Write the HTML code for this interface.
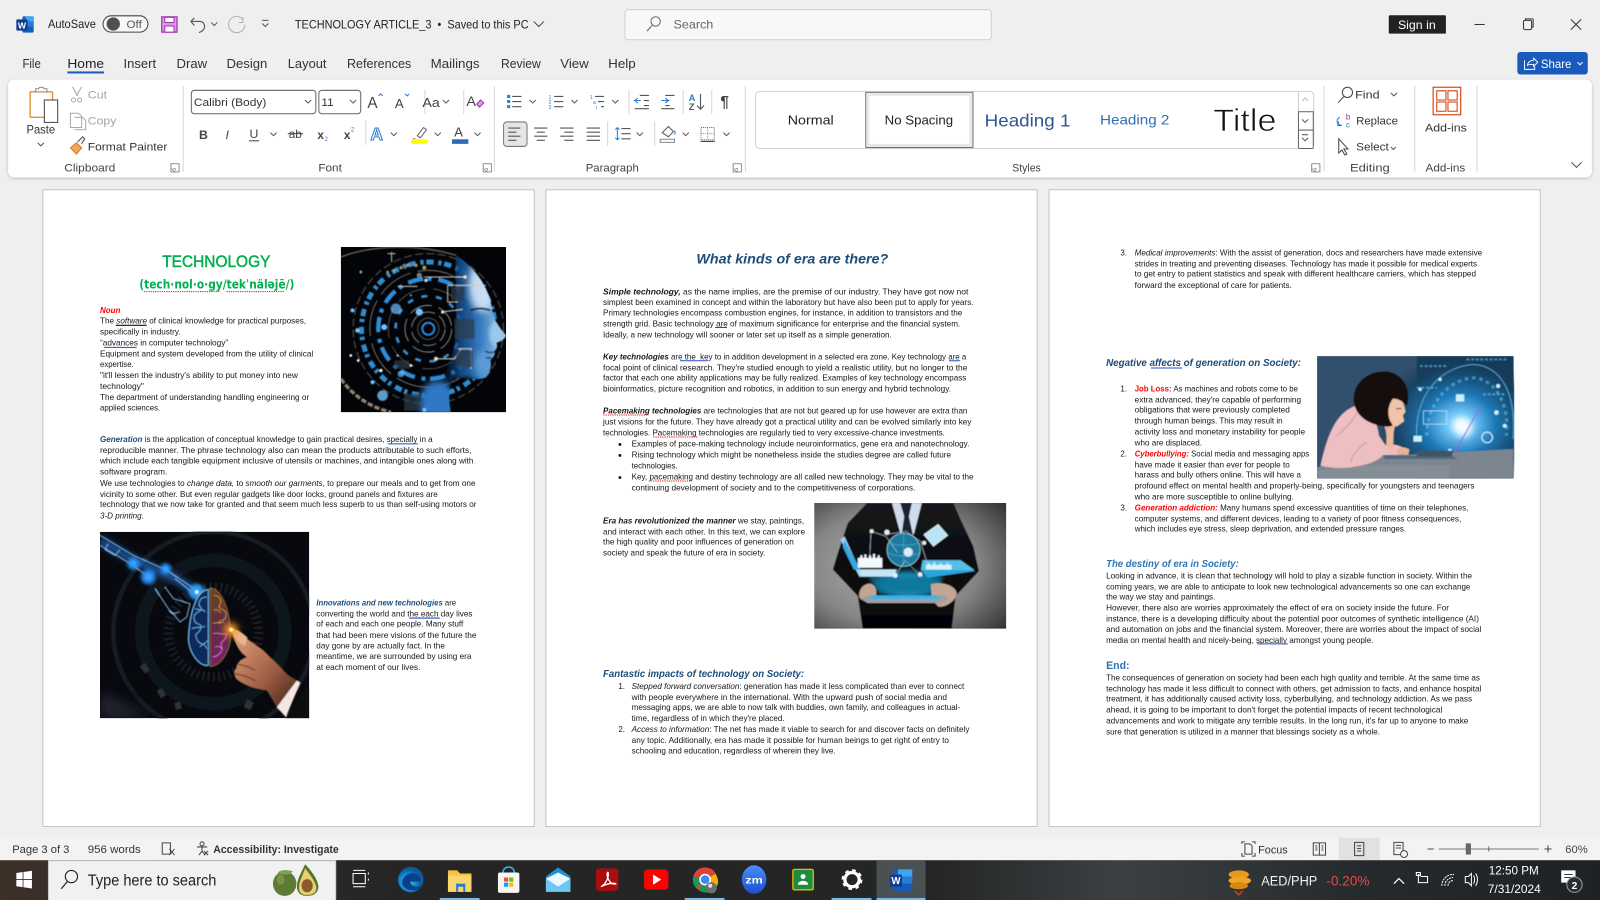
<!DOCTYPE html>
<html lang="en"><head><meta charset="utf-8"><title>TECHNOLOGY ARTICLE_3 - Word</title>
<style>
html,body{margin:0;padding:0;background:#efefef;overflow:hidden}
svg{display:block}
text{font-family:"Liberation Sans",sans-serif;white-space:pre}
.d{font-size:7.8px;fill:#181818}
.u{font-size:12px;fill:#333}
.g{font-size:11px;fill:#444}
.s{font-size:10.5px;fill:#444}
.bi{font-weight:bold;font-style:italic}
.i{font-style:italic}
.b1{fill:#1F4E79}
.r{fill:#f00}
.ic{fill:none;stroke:#555;stroke-width:1}
.ln{stroke:#555;stroke-width:1.1;fill:none}
.w{fill:none;stroke:#fff}
</style></head><body>
<svg xmlns="http://www.w3.org/2000/svg" width="1600" height="900" viewBox="0 0 1568 882">
<defs>
<path id="c" d="M0 0l3 3 3-3" fill="none" stroke="#555" stroke-width="1"/>
<g id="lb"><path d="M0 0v0M1 8l6 6M7 8h-3M7 8v3" transform="scale(.6)" fill="none" stroke="#555"/><rect x="0" y="0" width="8" height="8" fill="none" stroke="#777" stroke-width=".8"/></g>
<filter id="soft" x="-2%" y="-2%" width="104%" height="104%"><feGaussianBlur stdDeviation=".22"/></filter>
<filter id="img" x="0" y="0" width="100%" height="100%"><feGaussianBlur stdDeviation="1.3"/></filter>
<filter id="bl2"><feGaussianBlur stdDeviation="2"/></filter>
<filter id="bl5" x="-50%" y="-50%" width="200%" height="200%"><feGaussianBlur stdDeviation="5"/></filter>
<filter id="bl10" x="-50%" y="-50%" width="200%" height="200%"><feGaussianBlur stdDeviation="10"/></filter>
<filter id="bl20" x="-50%" y="-50%" width="200%" height="200%"><feGaussianBlur stdDeviation="20"/></filter>
<filter id="shd" x="-2%" y="-10%" width="104%" height="125%"><feDropShadow dx="0" dy="1" stdDeviation="1.6" flood-color="#000" flood-opacity=".22"/></filter>
<linearGradient id="face" gradientUnits="userSpaceOnUse" x1="300" y1="0" x2="475" y2="0"><stop offset="0" stop-color="#0d3a78" stop-opacity="0"/><stop offset=".35" stop-color="#16508f" stop-opacity=".9"/><stop offset=".7" stop-color="#3a80c2"/><stop offset="1" stop-color="#8fbfe6"/></linearGradient>
<clipPath id="fc"><path d="M345 25C400 60 438 115 450 170L456 205C466 230 482 250 495 265 492 275 480 283 466 287 470 296 468 306 460 312 464 324 454 332 448 340 452 358 448 378 430 392 405 402 365 388 338 396 322 415 322 460 330 495H180V25Z"/></clipPath>
<radialGradient id="gbg" cx=".42" cy=".5" r=".75"><stop offset="0" stop-color="#b4b4b4"/><stop offset=".55" stop-color="#858585"/><stop offset="1" stop-color="#262626"/></radialGradient>
<linearGradient id="tb" x1="0" y1="0" x2="1" y2="0"><stop offset="0" stop-color="#3c3029"/><stop offset=".25" stop-color="#262525"/><stop offset=".58" stop-color="#242525"/><stop offset=".7" stop-color="#3b4042"/><stop offset=".85" stop-color="#252a2c"/><stop offset="1" stop-color="#1f2224"/></linearGradient>
<radialGradient id="edge" cx=".4" cy=".6"><stop offset="0" stop-color="#47d27f"/><stop offset=".5" stop-color="#1c9ad6"/><stop offset="1" stop-color="#0c59a4"/></radialGradient>
<linearGradient id="zmg" x1="0" y1="0" x2="0" y2="1"><stop offset="0" stop-color="#4a8cff"/><stop offset="1" stop-color="#1a4fd0"/></linearGradient>
<radialGradient id="dome"><stop offset="0" stop-color="#f2fbff"/><stop offset=".13" stop-color="#7ad0ff"/><stop offset=".42" stop-color="#1f7ab8"/><stop offset=".8" stop-color="#123f60" stop-opacity=".8"/><stop offset="1" stop-color="#1b3a55" stop-opacity="0"/></radialGradient>
<linearGradient id="hand" x1="0" y1="0" x2="1" y2="1"><stop offset="0" stop-color="#e8a880"/><stop offset=".6" stop-color="#9c5c42"/><stop offset="1" stop-color="#3e2218"/></linearGradient>
<linearGradient id="brr" x1="0" y1="0" x2="0" y2="1"><stop offset="0" stop-color="#b87a28"/><stop offset=".45" stop-color="#a84a70"/><stop offset="1" stop-color="#d238b0"/></linearGradient>
<linearGradient id="suit" x1="0" y1="0" x2="0" y2="1"><stop offset="0" stop-color="#15161b"/><stop offset="1" stop-color="#050506"/></linearGradient>
</defs>

<rect width="1568" height="882" fill="#efefef"/>

<!-- TITLE BAR -->
<g>
<rect x="22" y="16" width="11" height="16" rx="1" fill="#185abd"/><rect x="25" y="16" width="8" height="5" fill="#41a5ee"/><rect x="25" y="21" width="8" height="5" fill="#2b7cd3"/><rect x="16" y="19" width="11" height="11" rx="1" fill="#103f91"/>
<text x="17.5" y="27.8" style="font-size:8.5px;font-weight:bold;fill:#fff">W</text>
<text x="47" y="27.5" class="u" textLength="47" lengthAdjust="spacingAndGlyphs" style="fill:#222">AutoSave</text>
<rect x="101" y="15.5" width="44" height="16" rx="8" fill="#f7f7f7" stroke="#444"/><circle cx="111" cy="23.5" r="6.5" fill="#505050"/><text x="124" y="27.5" style="font-size:10.5px;fill:#555" textLength="15" lengthAdjust="spacingAndGlyphs">Off</text>
<rect x="158.5" y="16.5" width="15" height="15" fill="#d79be0" stroke="#a530b8" stroke-width="1.2"/><rect x="161.5" y="17" width="9" height="5" fill="#fff" stroke="#a530b8"/><rect x="161.5" y="25.5" width="9" height="6" fill="#fff" stroke="#a530b8"/>
<path d="M187 21l3.5-3.5M187 21h9c3 0 4.5 2.5 4.5 5 0 3-3 5-5.5 6M187 21l3.5 4" fill="none" stroke="#555" stroke-width="1.1"/>
<use href="#c" x="207" y="22"/>
<path d="M238 21c0-3-3-5-6-5-4 0-8 3-8 8s4 8 8 8 8-3 8-8M238 17v5h-4" fill="none" stroke="#b0b0b0" stroke-width="1"/>
<path d="M257 20h6M257 23l3 3 3-3" fill="none" stroke="#555"/>
<text x="289" y="28" class="u" textLength="229" lengthAdjust="spacingAndGlyphs" style="fill:#222;font-size:12px">TECHNOLOGY ARTICLE_3  •  Saved to this PC</text>
<path d="M523 21l5 5 5-5" fill="none" stroke="#444"/>
<rect x="612.5" y="9.5" width="359" height="29.5" rx="3" fill="#f8f8f8" stroke="#d0d0d0"/>
<circle cx="642.5" cy="21" r="4.6" fill="none" stroke="#666"/><path d="M639 25l-5 5.5" stroke="#666" fill="none"/>
<text x="660" y="28" class="u" textLength="39" lengthAdjust="spacingAndGlyphs" style="fill:#666">Search</text>
<rect x="1361" y="15" width="56" height="18" rx="1" fill="#222"/><text x="1370" y="28.5" style="font-size:12px;fill:#fff" textLength="37" lengthAdjust="spacingAndGlyphs">Sign in</text>
<path d="M1445 24h10" stroke="#333"/><rect x="1493" y="20" width="8" height="9" rx="1.5" fill="none" stroke="#333"/><path d="M1495 20v-1.5h6.5a1 1 0 011 1v7h-1.5" fill="none" stroke="#333"/><path d="M1539.5 19l10 10m0-10l-10 10" stroke="#333"/>
</g>
<!-- TABS -->
<g class="tabs" style="font-size:12.5px">
<text x="22" y="66.5" class="u" style="font-size:12.5px" textLength="18" lengthAdjust="spacingAndGlyphs">File</text>
<text x="66" y="66.5" class="u" style="font-size:12.5px;fill:#222;font-weight:500" textLength="36" lengthAdjust="spacingAndGlyphs">Home</text>
<text x="121" y="66.5" class="u" style="font-size:12.5px" textLength="32" lengthAdjust="spacingAndGlyphs">Insert</text>
<text x="173" y="66.5" class="u" style="font-size:12.5px" textLength="30" lengthAdjust="spacingAndGlyphs">Draw</text>
<text x="222" y="66.5" class="u" style="font-size:12.5px" textLength="40" lengthAdjust="spacingAndGlyphs">Design</text>
<text x="282" y="66.5" class="u" style="font-size:12.5px" textLength="38" lengthAdjust="spacingAndGlyphs">Layout</text>
<text x="340" y="66.5" class="u" style="font-size:12.5px" textLength="63" lengthAdjust="spacingAndGlyphs">References</text>
<text x="422" y="66.5" class="u" style="font-size:12.5px" textLength="48" lengthAdjust="spacingAndGlyphs">Mailings</text>
<text x="491" y="66.5" class="u" style="font-size:12.5px" textLength="39" lengthAdjust="spacingAndGlyphs">Review</text>
<text x="549" y="66.5" class="u" style="font-size:12.5px" textLength="28" lengthAdjust="spacingAndGlyphs">View</text>
<text x="596" y="66.5" class="u" style="font-size:12.5px" textLength="27" lengthAdjust="spacingAndGlyphs">Help</text>
</g>
<rect x="66" y="70" width="36" height="2" fill="#185abd"/>
<rect x="1487" y="51" width="69" height="22" rx="3" fill="#185abd"/>
<path d="M1494 59v9h10v-3M1497 64c0-3 3-5 6-5v-2l4 4-4 4v-2c-3 0-5 0-6 1z" fill="none" stroke="#fff" stroke-width=".9"/>
<text x="1510" y="66.5" style="font-size:12px;fill:#fff" textLength="30" lengthAdjust="spacingAndGlyphs">Share</text><path d="M1546 61l2.5 2.5 2.5-2.5" stroke="#fff" fill="none"/>

<!-- RIBBON -->
<rect x="8" y="78" width="1552" height="96" rx="6" fill="#fff" filter="url(#shd)"/>
<g stroke="#d6d6d6">
<path d="M179.5 84v84M484.5 84v84M730.5 84v84M1297.5 84v84M1386.5 84v84M1447.5 84v84"/>
<path d="M358.5 118v24M416.5 88v24M454.5 88v24M595.5 119v24M641.5 119v24M616.5 88v24M669.5 88v24M697.5 88v24"/>
</g>
<!-- clipboard -->
<rect x="29.5" y="90" width="22" height="25" rx="1" fill="#fff" stroke="#e8912a" stroke-width="1.4"/>
<path d="M35 90v-3h3c0-2 5-2 5 0h3v3z" fill="#fff" stroke="#888"/>
<rect x="43.5" y="98" width="13" height="22" fill="#fff" stroke="#555" stroke-width="1.1"/>
<text x="26" y="131" class="u" textLength="28" lengthAdjust="spacingAndGlyphs" style="fill:#333">Paste</text>
<use href="#c" x="37" y="140"/>
<path d="M71 85l5 9m4-9l-5 9M70 98a2 2 0 104 0 2 2 0 10-4 0m6 0a2 2 0 104 0 2 2 0 10-4 0" fill="none" stroke="#aaa"/>
<text x="86" y="96.5" class="g" textLength="19" lengthAdjust="spacingAndGlyphs" style="fill:#a5a5a5">Cut</text>
<path d="M69 111h8l3 3v11H69zM73 115h8l3 3v9h-11" fill="none" stroke="#aaa"/>
<text x="86" y="122" class="g" textLength="28" lengthAdjust="spacingAndGlyphs" style="fill:#a5a5a5">Copy</text>
<path d="M69 145l6-5 5 5-5 6z" fill="#f0a860" stroke="#d57a20"/><path d="M76 139l5-5 2 2-3 5" fill="#eee" stroke="#555"/>
<text x="86" y="147.5" class="g" textLength="78" lengthAdjust="spacingAndGlyphs" style="fill:#333">Format Painter</text>
<text x="63" y="168" class="s" textLength="50" lengthAdjust="spacingAndGlyphs">Clipboard</text>
<use href="#lb" x="167.5" y="160.5"/>
<!-- font -->
<rect x="187.5" y="88.5" width="122" height="23" rx="3" fill="#fff" stroke="#666"/>
<text x="190" y="104" class="g" textLength="71" lengthAdjust="spacingAndGlyphs" style="fill:#333">Calibri (Body)</text><use href="#c" x="299" y="98"/>
<rect x="312.5" y="88.5" width="41" height="23" rx="3" fill="#fff" stroke="#666"/>
<text x="315" y="104" class="g" textLength="12" lengthAdjust="spacingAndGlyphs" style="fill:#333">11</text><use href="#c" x="343" y="98"/>
<text x="360" y="106" style="font-size:15px;fill:#444">A</text><path d="M371 94l2-2 2 2" stroke="#2b7cd3" fill="none"/>
<text x="387" y="106" style="font-size:13px;fill:#444">A</text><path d="M397 92l2 2 2-2" stroke="#2b7cd3" fill="none"/>
<text x="414" y="105" style="font-size:13px;fill:#444" textLength="17" lengthAdjust="spacingAndGlyphs">Aa</text><use href="#c" x="434" y="98"/>
<text x="457" y="104" style="font-size:14px;fill:#444">A</text><path d="M467 102l4-4 3 3-4 4z" fill="#d99be6" stroke="#a530b8"/>
<text x="195" y="136" style="font-size:12px;font-weight:bold;fill:#444">B</text>
<text x="221" y="136" style="font-size:12px;font-style:italic;fill:#444">I</text>
<text x="244.5" y="135" style="font-size:12px;fill:#444">U</text><path d="M244 138h10" stroke="#444"/><use href="#c" x="265" y="130"/>
<text x="283" y="135" style="font-size:11.5px;fill:#444">ab</text><path d="M282 131h15" stroke="#444"/>
<text x="311" y="136" style="font-size:11.5px;font-weight:bold;fill:#444">x</text><text x="318" y="138" style="font-size:6px;fill:#2b7cd3">2</text>
<text x="337" y="136" style="font-size:11.5px;font-weight:bold;fill:#444">x</text><text x="344" y="129" style="font-size:6px;fill:#2b7cd3">2</text>
<text x="363" y="137" style="font-size:17px;font-weight:bold;fill:#fff;stroke:#2f79c8;stroke-width:1">A</text><use href="#c" x="383" y="130"/>
<path d="M409 133l6-8 3 2-6 8zM405 136h2" fill="#fff" stroke="#666"/><rect x="403" y="136.5" width="16" height="4.5" fill="#ff0"/><use href="#c" x="426" y="130"/>
<text x="445" y="134" style="font-size:13px;fill:#444">A</text><rect x="443" y="136.5" width="16" height="4.5" fill="#2f6db1"/><use href="#c" x="465" y="130"/>
<text x="312" y="168" class="s" textLength="23" lengthAdjust="spacingAndGlyphs">Font</text>
<use href="#lb" x="473.5" y="160.5"/>
<!-- paragraph row1 -->
<g>
<path d="M502 94.5h9M502 99.5h9M502 104.5h9" class="ln"/><path d="M497 93h3v3h-3zM497 98h3v3h-3zM497 103h3v3h-3z" fill="#2b7cd3"/><use href="#c" x="519" y="98"/>
<path d="M543 94.5h9M543 99.5h9M543 104.5h9" class="ln"/><text x="537.5" y="97" style="font-size:5px;fill:#2b7cd3">1</text><text x="537.5" y="102" style="font-size:5px;fill:#2b7cd3">2</text><text x="537.5" y="107" style="font-size:5px;fill:#2b7cd3">3</text><use href="#c" x="560" y="98"/>
<path d="M583 94.5h9M586 99.5h6M589 104.5h3" class="ln"/><text x="578" y="97" style="font-size:5px;fill:#2b7cd3">1</text><text x="581" y="102" style="font-size:5px;fill:#2b7cd3">a</text><text x="584" y="107" style="font-size:5px;fill:#2b7cd3">i</text><use href="#c" x="600" y="98"/>
<path d="M627 93.5h9M631 98.5h5M631 103.5h5M622 106.5h14" class="ln"/><path d="M628 98.5h-6l3-2.5m-3 2.5l3 2.5" stroke="#2b7cd3" fill="none"/>
<path d="M652 93.5h9M652 98.5h4M652 103.5h4M648 106.5h13" class="ln"/><path d="M650 98.5h7m-3-2.5l3 2.5-3 2.5" stroke="#2b7cd3" fill="none" transform="translate(-2 0)"/>
<text x="675" y="99" style="font-size:9px;font-weight:bold;fill:#2b7cd3">A</text><text x="675" y="108" style="font-size:9px;font-weight:bold;fill:#555">Z</text><path d="M686.5 92v15m-3.5-3.5l3.5 3.5 3.5-3.5" class="ln"/>
<text x="706" y="105" style="font-size:15px;font-weight:bold;fill:#444">¶</text>
</g>
<rect x="493.5" y="119.5" width="23" height="24" rx="3" fill="#e5e5e5" stroke="#777"/>
<path d="M498 125.5h12M498 129.5h8M498 133.5h12M498 137.5h8" class="ln"/>
<path d="M523.5 125.5h13M526 129.5h8M523.5 133.5h13M526 137.5h8" class="ln"/>
<path d="M549 125.5h13M553 129.5h9M549 133.5h13M553 137.5h9" class="ln"/>
<path d="M575 125.5h13M575 129.5h13M575 133.5h13M575 137.5h13" class="ln"/>
<path d="M609 126h9M609 131h9M609 136h9" class="ln"/><path d="M605 125v12m-2-10l2-2 2 2m-4 8l2 2 2-2" stroke="#2b7cd3" fill="none"/><use href="#c" x="624" y="130"/>
<path d="M649 130l6-6 5 5-5 5z" fill="none" stroke="#555"/><path d="M661 128c1 2 1 3 0 4" stroke="#2b7cd3" fill="none"/><rect x="647" y="136.5" width="14" height="3" fill="#fff" stroke="#888"/><use href="#c" x="669" y="130"/>
<rect x="687" y="125" width="13" height="12" fill="none" stroke="#666" stroke-dasharray="1 1"/><path d="M686.5 138.5h14" stroke="#222"/><path d="M693.5 125v12M687 131h13" stroke="#888" stroke-dasharray="1 1"/><use href="#c" x="709" y="130"/>
<text x="574" y="168" class="s" textLength="52" lengthAdjust="spacingAndGlyphs">Paragraph</text>
<use href="#lb" x="718.5" y="160.5"/>
<!-- styles -->
<rect x="740.5" y="89.5" width="547" height="56" rx="4" fill="#fff" stroke="#d0d0d0"/>
<text x="772" y="122" style="font-size:12.5px;fill:#222" textLength="45" lengthAdjust="spacingAndGlyphs">Normal</text>
<rect x="848.5" y="90.5" width="105" height="54" fill="#fff" stroke="#6a6a6a"/><rect x="850.5" y="92.5" width="101" height="50" fill="none" stroke="#e8e8e8" stroke-width="3"/>
<text x="867" y="122" style="font-size:12.5px;fill:#222" textLength="67" lengthAdjust="spacingAndGlyphs">No Spacing</text>
<text x="965" y="124" style="font-size:17.5px;fill:#2F5496" textLength="84" lengthAdjust="spacingAndGlyphs">Heading 1</text>
<text x="1078" y="122" style="font-size:14px;fill:#2F6EB8" textLength="68" lengthAdjust="spacingAndGlyphs">Heading 2</text>
<text x="1189" y="128.5" style="font-size:31px;fill:#111;stroke:#fff;stroke-width:.7;paint-order:normal" textLength="62" lengthAdjust="spacingAndGlyphs">Title</text>
<path d="M1272.5 90v55" stroke="#ccc"/>
<path d="M1276 99l3-3 3 3" fill="none" stroke="#bbb"/>
<rect x="1272.5" y="109.5" width="14.5" height="18" fill="#fff" stroke="#666"/><use href="#c" x="1276" y="117"/>
<rect x="1272.5" y="127.5" width="14.5" height="18" rx="1" fill="#fff" stroke="#666"/><path d="M1276 132h6" stroke="#555"/><use href="#c" x="1276" y="135"/>
<text x="992" y="168" class="s" textLength="28" lengthAdjust="spacingAndGlyphs">Styles</text>
<use href="#lb" x="1285.5" y="160.5"/>
<!-- editing -->
<circle cx="1320.5" cy="90.5" r="5" fill="none" stroke="#444"/><path d="M1317 94.5l-5.5 6" stroke="#444"/>
<text x="1328" y="96.5" class="g" textLength="24" lengthAdjust="spacingAndGlyphs" style="fill:#333">Find</text><use href="#c" x="1363" y="91"/>
<text x="1319" y="117" style="font-size:8px;fill:#a530b8">b</text><text x="1319" y="125" style="font-size:8px;fill:#2b7cd3">c</text><path d="M1313 115a4 4 0 00-1 7l3 1m-3-4l-1 4 4 0" fill="none" stroke="#2b7cd3"/>
<text x="1329" y="122" class="g" textLength="41" lengthAdjust="spacingAndGlyphs" style="fill:#333">Replace</text>
<path d="M1312 136v14l3-3 3 5 2-1-3-5h4z" fill="#fff" stroke="#444"/>
<text x="1329" y="147.5" class="g" textLength="32" lengthAdjust="spacingAndGlyphs" style="fill:#333">Select</text><path d="M1363 144l2.5 2.5 2.5-2.5" stroke="#555" fill="none"/>
<text x="1323" y="168" class="s" textLength="39" lengthAdjust="spacingAndGlyphs">Editing</text>
<!-- add-ins -->
<rect x="1404.5" y="85.5" width="27" height="27" fill="none" stroke="#d83b01" stroke-width="1.1"/>
<path d="M1408 89h9v9h-9zM1419 89h9v9h-9zM1408 100h9v9h-9zM1419 100h9v9h-9z" fill="none" stroke="#d83b01"/>
<text x="1396.5" y="129" class="g" textLength="41" lengthAdjust="spacingAndGlyphs" style="fill:#333">Add-ins</text>
<text x="1397" y="168" class="s" textLength="39" lengthAdjust="spacingAndGlyphs">Add-ins</text>
<path d="M1540 159l5 5 5-5" fill="none" stroke="#555"/>

<!-- PAGES -->
<rect x="42" y="186" width="481.5" height="624" fill="#fff" stroke="#c4c4c4"/>
<rect x="535" y="186" width="481.5" height="624" fill="#fff" stroke="#c4c4c4"/>
<rect x="1028" y="186" width="481.5" height="624" fill="#fff" stroke="#c4c4c4"/>

<!-- IMAGE 1 -->
<svg x="334" y="242" width="162" height="162" viewBox="0 0 495 495">
<rect width="495" height="495" fill="#020408"/>
<g filter="url(#img)">
<path d="M0 30C80 0 210 -15 345 25" fill="none" stroke="#6b6656" stroke-width="4"/>
<path d="M0 395C40 450 90 480 150 495" fill="none" stroke="#8d8570" stroke-width="10" stroke-dasharray="16 6"/>
<g fill="none">
<circle cx="262" cy="245" r="18" stroke="#2d8ad8" stroke-width="6"/>
<circle cx="262" cy="245" r="32" stroke="#9a9a90" stroke-width="1.5"/>
<circle cx="262" cy="245" r="50" stroke="#c8c6b8" stroke-width="2" stroke-dasharray="40 14"/>
<circle cx="262" cy="245" r="70" stroke="#c8c6b8" stroke-width="2" stroke-dasharray="70 20"/>
<circle cx="262" cy="245" r="98" stroke="#3fa0e8" stroke-width="8" stroke-dasharray="18 26" opacity=".9"/>
<circle cx="262" cy="245" r="120" stroke="#9a9a88" stroke-width="1.5" stroke-dasharray="90 26"/>
<circle cx="262" cy="245" r="150" stroke="#2e96e6" stroke-width="13" stroke-dasharray="46 14 12 20" opacity=".95"/>
<circle cx="262" cy="245" r="175" stroke="#b8b6a6" stroke-width="1.8" stroke-dasharray="110 22"/>
<circle cx="262" cy="245" r="200" stroke="#3aa2ee" stroke-width="15" stroke-dasharray="10 8 22 14" opacity=".85"/>
<circle cx="262" cy="245" r="225" stroke="#58585a" stroke-width="3" stroke-dasharray="24 10"/>
</g>
<path d="M345 25C400 60 438 115 450 170L456 205C466 230 482 250 495 265 492 275 480 283 466 287 470 296 468 306 460 312 464 324 454 332 448 340 452 358 448 378 430 392 405 402 365 388 338 396 322 415 322 460 330 495H240C300 420 345 330 345 240 345 150 340 70 345 25Z" fill="url(#face)"/>
<g clip-path="url(#fc)">
<ellipse cx="425" cy="115" rx="42" ry="80" fill="#cfe3f6" filter="url(#bl10)" opacity=".95"/>
<ellipse cx="470" cy="260" rx="25" ry="40" fill="#9cc6ea" filter="url(#bl5)"/>
<ellipse cx="430" cy="350" rx="28" ry="42" fill="#5c9ad6" filter="url(#bl10)"/>
<ellipse cx="290" cy="470" rx="55" ry="70" fill="#2f78c4" filter="url(#bl10)"/>
<ellipse cx="370" cy="415" rx="45" ry="26" fill="#04132c" filter="url(#bl5)"/>
</g>
<g fill="none" stroke="#cfcdc4" stroke-width="3"><path d="M250 90h120M170 118h60M320 115v50h30M320 115h115M300 195l65-8M280 335h60l20-30M350 305h40v60"/></g>
<g fill="#e8e0c8"><circle cx="372" cy="90" r="5"/><circle cx="255" cy="100" r="5"/><circle cx="285" cy="335" r="6"/><circle cx="305" cy="195" r="5"/></g>
<g fill="#b89a55"><circle cx="140" cy="75" r="4"/><circle cx="160" cy="70" r="4"/><circle cx="180" cy="62" r="5"/><circle cx="200" cy="55" r="5"/><circle cx="225" cy="55" r="5"/><circle cx="250" cy="62" r="6"/><circle cx="235" cy="85" r="8" fill="#7c7a70"/></g>
<g fill="#6fc1ff"><circle cx="165" cy="185" r="16" opacity=".7"/><circle cx="235" cy="195" r="11"/><circle cx="125" cy="445" r="16" opacity=".8"/><circle cx="60" cy="75" r="4"/><circle cx="210" cy="145" r="3"/><circle cx="35" cy="190" r="6"/><circle cx="50" cy="250" r="7"/><circle cx="130" cy="240" r="9"/><circle cx="95" cy="405" r="6"/><circle cx="250" cy="488" r="6"/><circle cx="180" cy="380" r="10" opacity=".7"/></g>
<g fill="#fff"><circle cx="30" cy="325" r="4"/><circle cx="52" cy="340" r="4"/><circle cx="120" cy="370" r="5"/><circle cx="210" cy="355" r="4"/><circle cx="170" cy="325" r="3"/></g>
<path d="M190 440h48v50h-48zM160 340h45v25h-45zM330 120h40v40h-40zM340 215h60v60h-60zM345 310h50v50h-50z" fill="#2e3c4a" opacity=".7"/>
<path d="M152 15v30M140 20h24" stroke="#c9c6b8" stroke-width="3"/>
<path d="M388 190c20-8 38-8 60 0" stroke="#081428" stroke-width="5" fill="none"/><path d="M432 312c8 4 18 6 28 2M434 332c8 0 14 0 18 2" stroke="#183c66" stroke-width="4" fill="none"/>
</g>
</svg>

<!-- IMAGE 2 -->
<svg x="98" y="521" width="205" height="183" viewBox="0 0 627 558">
<rect width="627" height="558" fill="#07090e"/>
<g filter="url(#img)">
<g fill="none"><circle cx="340" cy="300" r="135" stroke="#20232b" stroke-width="28" stroke-dasharray="5 11"/><circle cx="340" cy="300" r="215" stroke="#11131a" stroke-width="40"/><circle cx="340" cy="300" r="300" stroke="#171a21" stroke-width="14"/></g>
<path d="M0 480L160 558H0Z" fill="#3a3a4c" opacity=".6" filter="url(#bl20)"/>
<g fill="#2e313a"><rect x="125" y="395" width="18" height="26" transform="rotate(-35 134 408)"/><rect x="175" y="470" width="18" height="26" transform="rotate(-30 184 483)"/><rect x="225" y="510" width="18" height="22" transform="rotate(-15 234 521)"/><rect x="435" y="505" width="22" height="26" transform="rotate(25 446 518)"/></g>
<path d="M0 25L110 90 210 130 290 180" stroke="#2b8cff" stroke-width="22" fill="none" filter="url(#bl10)" opacity=".65"/>
<g fill="none" stroke="#8cc8ff" stroke-width="2.6"><path d="M0 10l100 60 100 45 90 60M0 40l90 55 50 35M165 170l50 75 25-5M195 165l25 35 50 15-10 40-20 15-30-35M225 140l50 40"/><path d="M25 35l-10 18 30 18 15-18"/></g>
<g fill="#bfe4ff"><circle cx="100" cy="95" r="8"/><circle cx="145" cy="135" r="10"/><circle cx="197" cy="110" r="7"/></g>
<g filter="url(#bl5)" opacity=".9"><circle cx="100" cy="95" r="18" fill="#2a9aff"/><circle cx="145" cy="135" r="22" fill="#2a9aff"/><circle cx="197" cy="110" r="16" fill="#2a9aff"/><circle cx="290" cy="180" r="24" fill="#35a5ff"/></g>
<circle cx="290" cy="180" r="6" fill="#d8f1ff"/>
<path d="M325 172c-34 4-55 60-60 140-3 50 35 95 60 88z" fill="#0b2c5a" stroke="#6abcf8" stroke-width="3.5"/>
<path d="M330 168c34 2 58 60 62 134 2 52-30 102-62 102z" fill="url(#brr)" opacity=".55" stroke="#e8a040" stroke-width="3.5"/>
<g fill="none" stroke="#78c4fa" stroke-width="2.2"><path d="M320 195c-20 0-30 20-18 32s-25 10-20 34 25 8 20 28-22 10-12 32 25 8 30 30M285 230c12 5 25 0 30 10M275 290c15-8 30 0 40-8M300 345c5-10 20-10 22-20"/></g>
<g fill="none" stroke="#f4b04a" stroke-width="2.2"><path d="M340 190c20 0 28 18 18 30s22 8 20 30-24 8-20 26"/><path d="M340 235c10-5 18 0 22 8M338 275c12-6 22 0 34-6"/></g>
<g fill="none" stroke="#ff7ce8" stroke-width="2.4"><path d="M338 305c18-5 30 5 40 0 5 20-22 22-14 38 6 14-6 28-26 32M345 345c10-5 16 0 22 6"/></g>
<path d="M392 292c10-6 30 8 48 28l50 35 40 40 35 35 25 15-60 80-30-50c-35-5-70-15-92-35-8-12-6-25 2-35 0-14 15-25 30-30-12-8-30-20-48-83z" fill="url(#hand)"/>
<path d="M392 292c12-6 35 10 50 25l-8 25c-15-8-35-25-42-50z" fill="#edb48e"/>
<path d="M410 395c15 5 30 5 55 20M405 425c20 5 35 5 60 22" stroke="#5e3424" stroke-width="3" fill="none"/>
<path d="M555 558L620 455 627 470V558z" fill="#0a0a0a"/><path d="M530 525L590 445 600 452 557 555Z" fill="#f4e6e2"/>
<circle cx="393" cy="293" r="20" fill="#ff9a1c" filter="url(#bl10)"/><circle cx="393" cy="293" r="6" fill="#fff4c0"/>
</g>
</svg>

<!-- IMAGE 3 -->
<svg x="798" y="493" width="188" height="123" viewBox="0 0 576 378">
<rect width="576" height="378" fill="#4a4a4a"/>
<g filter="url(#img)">
<rect x="-20" y="-20" width="616" height="420" fill="url(#gbg)"/>
<path d="M158 0L100 60 70 150 55 200 130 280 145 378H413L425 280 495 205 478 130 440 50 418 0Z" fill="url(#suit)"/>
<path d="M233 0H323L300 90 280 125 258 90Z" fill="#cfdcec"/><path d="M258 0H293L284 40 296 95 278 120 262 95 270 40Z" fill="#1c2230"/>
<ellipse cx="280" cy="245" rx="95" ry="38" fill="#1aa0d0" filter="url(#bl10)"/>
<path d="M160 220h230l-25 50H195z" fill="#0e6f92" opacity=".8" filter="url(#bl5)"/>
<path d="M78 110L90 100 135 200H248L240 222H135Z" fill="#9ad4f0"/><path d="M90 112L138 200H118L85 132Z" fill="#3aa6e2"/>
<path d="M135 200h110l-6 20H140z" fill="#d8eef8" opacity=".7"/>
<path d="M320 200H470L485 205 340 225Z" fill="#2aa4dc"/><path d="M325 172h115l42 30H320z" fill="#56bde6"/>
<circle cx="268" cy="141" r="50" fill="#1d7aa0"/><circle cx="268" cy="141" r="50" fill="none" stroke="#9fd7ea" stroke-width="2"/><circle cx="282" cy="148" r="14" fill="#d8eef6"/><path d="M225 120c30 10 60 10 90 0M220 150c30 12 65 12 96 0M268 92v98" stroke="#8cd0e6" fill="none"/>
<path d="M330 95l42-30 28 32-42 32z" fill="#b8e4f6" stroke="#dff2fa" stroke-width="3"/>
<g fill="none" stroke="#c8d8e0" stroke-width="1.5"><path d="M170 85l45 15 35 50M215 95l60-10 50 35M320 120l25 80M170 85l-5 100M243 218l30-45 45 45"/></g>
<g fill="#e8eef2"><circle cx="172" cy="85" r="6"/><circle cx="218" cy="88" r="8"/><circle cx="330" cy="120" r="6"/><circle cx="318" cy="215" r="7"/><circle cx="243" cy="218" r="7"/></g>
<g fill="#f2fafe"><path d="M130 195v-30h8v-8h6v8h6v-10h6v10h8v-8h6v8h6v-12h6v12h8v-8h6v8h8v30z"/><path d="M335 200v-14h6v-6h5v6h12v-8h5v8h14v-6h5v6h16v-6h5v6h10v14z" opacity=".85"/></g>
<path d="M135 285c-5-25 15-45 35-42 15 5 18 20 15 40l-30 12zM350 245c25-10 72 0 78 25 0 25-35 45-55 42l-20-20z" fill="#c4a594"/>
<path d="M137 288L160 278H390L404 288 380 301H160Z" fill="#9aa0a6"/><path d="M165 288h215l-12-10H172z" fill="#2fb2f0"/>
</g>
</svg>

<!-- IMAGE 4 -->
<svg x="1290" y="349" width="194" height="120" viewBox="0 0 591 369">
<rect width="591" height="369" fill="#24415e"/>
<g filter="url(#img)">
<rect width="320" height="369" fill="#33506e"/>
<rect x="300" width="291" height="369" fill="#153a58"/>
<ellipse cx="430" cy="205" rx="250" ry="215" fill="url(#dome)"/>
<g fill="none" stroke="#6fd2ff" stroke-width="2" opacity=".9"><path d="M300 250C290 110 380 30 470 25 560 30 600 120 590 250"/><path d="M330 240C330 140 400 70 470 65 540 70 580 150 570 240" stroke-dasharray="10 12" stroke-width="9" opacity=".55"/><path d="M310 30h80M450 10h120M300 95h60M500 115h70" stroke-width="5" stroke-dasharray="8 6" opacity=".7"/></g>
<g fill="#c8f0ff"><rect x="418" y="115" width="25" height="22"/><circle cx="512" cy="245" r="16" fill="none" stroke="#e0f6ff" stroke-width="3"/><rect x="320" y="165" width="70" height="40" fill="none" stroke="#bfeaff" stroke-width="2"/><rect x="290" y="240" width="25" height="18"/><circle cx="470" cy="300" r="10"/><circle cx="540" cy="170" r="7"/><circle cx="310" cy="100" r="5"/><circle cx="370" cy="70" r="5"/><circle cx="545" cy="90" r="6"/><circle cx="565" cy="210" r="6"/><circle cx="400" cy="285" r="6"/></g>
<circle cx="440" cy="215" r="28" fill="#f4fcff" filter="url(#bl10)"/>
<path d="M490 155L400 315" stroke="#a14bd0" stroke-width="3"/>
<path d="M0 335C100 310 180 300 300 296L591 280V369H0Z" fill="#7d8690"/>
<path d="M0 345c100-20 250-20 400-15v39H0z" fill="#8d959d" opacity=".5"/>
<path d="M205 300h200l20 10H200z" fill="#55697a"/><path d="M300 285h110l-5 18H300z" fill="#3e5568"/>
<path d="M10 330C30 240 55 175 110 152 150 142 180 190 186 240L205 268C235 262 262 272 275 292 255 302 215 296 198 299 165 335 60 345 10 330Z" fill="#eebfc2"/>
<path d="M60 240c20-20 50-45 60-70M100 320c10-30 30-50 50-60" stroke="#d79fa8" fill="none" stroke-width="4"/>
<path d="M200 205C215 240 205 265 210 275L228 285C232 262 225 225 238 205Z" fill="#eeb89c"/>
<path d="M215 100L250 120 262 150 266 168 258 178 262 196 240 212 210 205Z" fill="#f0c4aa"/>
<path d="M215 47C150 40 106 85 110 135 114 175 145 205 205 212 225 214 232 208 222 200 210 178 212 150 228 128 245 128 262 138 270 150 285 105 260 55 215 47Z" fill="#16100e"/>
<path d="M238 158h16" stroke="#2a1a14" stroke-width="3"/>
<path d="M238 286c8-14 28-14 40-4l-4 16-34-2z" fill="#e9b196"/>
</g>
</svg>

<!-- DOC TEXT -->
<g filter="url(#soft)">
<!-- Page 1 -->
<text x="159" y="261.5" textLength="106" lengthAdjust="spacingAndGlyphs" style="font-size:16px;font-weight:normal;fill:#00B050;stroke:#00B050;stroke-width:.45">TECHNOLOGY</text>
<text x="136.5" y="282.5" textLength="152" lengthAdjust="spacingAndGlyphs" style="font-size:12.5px;font-weight:bold;fill:#00B050;font-family:'DejaVu Sans','Liberation Sans',sans-serif">(tech·nol·o·gy/tekˈnäləjē/)</text>
<text x="98" y="306.5" textLength="20" lengthAdjust="spacingAndGlyphs" class="d bi" style="fill:#f00">Noun</text>
<text x="98" y="317" textLength="202" lengthAdjust="spacingAndGlyphs" class="d">The <tspan class="i">software</tspan> of clinical knowledge for practical purposes,</text>
<text x="98" y="327.7" textLength="79" lengthAdjust="spacingAndGlyphs" class="d">specifically in industry.</text>
<text x="98" y="338.5" textLength="125.5" lengthAdjust="spacingAndGlyphs" class="d">“advances in computer technology”</text>
<text x="98" y="349.2" textLength="209" lengthAdjust="spacingAndGlyphs" class="d">Equipment and system developed from the utility of clinical</text>
<text x="98" y="359.5" textLength="33" lengthAdjust="spacingAndGlyphs" class="d">expertise.</text>
<text x="98" y="370.3" textLength="194" lengthAdjust="spacingAndGlyphs" class="d">"it'll lessen the industry's ability to put money into new</text>
<text x="98" y="381" textLength="43" lengthAdjust="spacingAndGlyphs" class="d">technology"</text>
<text x="98" y="391.8" textLength="205" lengthAdjust="spacingAndGlyphs" class="d">The department of understanding handling engineering or</text>
<text x="98" y="402.5" textLength="59" lengthAdjust="spacingAndGlyphs" class="d">applied sciences.</text>
<text x="98" y="433.3" textLength="326" lengthAdjust="spacingAndGlyphs" class="d"><tspan class="bi b1">Generation</tspan> is the application of conceptual knowledge to gain practical desires, specially in a</text>
<text x="98" y="444" textLength="364" lengthAdjust="spacingAndGlyphs" class="d">reproducible manner. The phrase technology also can mean the products attributable to such efforts,</text>
<text x="98" y="454" textLength="366" lengthAdjust="spacingAndGlyphs" class="d">which include each tangible equipment inclusive of utensils or machines, and intangible ones along with</text>
<text x="98" y="464.8" textLength="66" lengthAdjust="spacingAndGlyphs" class="d">software program.</text>
<text x="98" y="476.5" textLength="368" lengthAdjust="spacingAndGlyphs" class="d">We use technologies to <tspan class="i">change data,</tspan> to <tspan class="i">smooth our garments</tspan>, to prepare our meals and to get from one</text>
<text x="98" y="487.2" textLength="331" lengthAdjust="spacingAndGlyphs" class="d">vicinity to some other. But even regular gadgets like door locks, ground panels and fixtures are</text>
<text x="98" y="497" textLength="369" lengthAdjust="spacingAndGlyphs" class="d">technology that we now take for granted and that seem much less superb to us than self-using motors or</text>
<text x="98" y="508" textLength="43" lengthAdjust="spacingAndGlyphs" class="d i">3-D printing.</text>
<text x="310" y="593.5" textLength="137" lengthAdjust="spacingAndGlyphs" class="d"><tspan class="bi b1">Innovations and new technologies</tspan> are</text>
<text x="310" y="604.2" textLength="153" lengthAdjust="spacingAndGlyphs" class="d">converting the world and the each day lives</text>
<text x="310" y="614.2" textLength="144" lengthAdjust="spacingAndGlyphs" class="d">of each and each one people. Many stuff</text>
<text x="310" y="625" textLength="157" lengthAdjust="spacingAndGlyphs" class="d">that had been mere visions of the future the</text>
<text x="310" y="635.6" textLength="126" lengthAdjust="spacingAndGlyphs" class="d">day gone by are actually fact. In the</text>
<text x="310" y="646" textLength="152" lengthAdjust="spacingAndGlyphs" class="d">meantime, we are surrounded by using era</text>
<text x="310" y="656.5" textLength="102" lengthAdjust="spacingAndGlyphs" class="d">at each moment of our lives.</text>

<!-- Page 2 -->
<text x="682.5" y="258" textLength="188" lengthAdjust="spacingAndGlyphs" class="bi b1" style="font-size:13.5px">What kinds of era are there?</text>
<text x="591" y="288.5" textLength="358" lengthAdjust="spacingAndGlyphs" class="d"><tspan class="bi">Simple technology,</tspan> as the name implies, are the premise of our industry. They have got now not</text>
<text x="591" y="299" textLength="363" lengthAdjust="spacingAndGlyphs" class="d">simplest been examined in concept and within the laboratory but have also been put to apply for years.</text>
<text x="591" y="309.3" textLength="352" lengthAdjust="spacingAndGlyphs" class="d">Primary technologies encompass combustion engines, for instance, in addition to transistors and the</text>
<text x="591" y="320" textLength="350" lengthAdjust="spacingAndGlyphs" class="d">strength grid. Basic technology are of maximum significance for enterprise and the financial system.</text>
<text x="591" y="330.8" textLength="283" lengthAdjust="spacingAndGlyphs" class="d">Ideally, a new technology will sooner or later set up itself as a simple generation.</text>
<text x="591" y="352.4" textLength="356" lengthAdjust="spacingAndGlyphs" class="d"><tspan class="bi">Key technologies</tspan> are the  key to in addition development in a selected era zone. Key technology are a</text>
<text x="591" y="363" textLength="357" lengthAdjust="spacingAndGlyphs" class="d">focal point of clinical research. They're studied enough to yield a realistic utility, but no longer to the</text>
<text x="591" y="373" textLength="356" lengthAdjust="spacingAndGlyphs" class="d">factor that each one ability applications may be fully realized. Examples of key technology encompass</text>
<text x="591" y="383.8" textLength="341" lengthAdjust="spacingAndGlyphs" class="d">bioinformatics, picture recognition and robotics, in addition to sun energy and hybrid technology.</text>
<text x="591" y="405.4" textLength="357" lengthAdjust="spacingAndGlyphs" class="d"><tspan class="bi">Pacemaking technologies</tspan> are technologies that are not but geared up for use however are extra than</text>
<text x="591" y="416" textLength="361" lengthAdjust="spacingAndGlyphs" class="d">just visions for the future. They have already got a practical utility and can be evolved similarly into key</text>
<text x="591" y="426.8" textLength="335" lengthAdjust="spacingAndGlyphs" class="d">technologies. Pacemaking technologies are regularly tied to very excessive-chance investments.</text>
<circle cx="607.5" cy="435.5" r="1.4" fill="#111"/><circle cx="607.5" cy="446.3" r="1.4" fill="#111"/><circle cx="607.5" cy="468" r="1.4" fill="#111"/>
<text x="619" y="437.6" textLength="331" lengthAdjust="spacingAndGlyphs" class="d">Examples of pace-making technology include neuroinformatics, gene era and nanotechnology.</text>
<text x="619" y="448.4" textLength="313" lengthAdjust="spacingAndGlyphs" class="d">Rising technology which might be nonetheless inside the studies degree are called future</text>
<text x="619" y="459" textLength="45" lengthAdjust="spacingAndGlyphs" class="d">technologies.</text>
<text x="619" y="470" textLength="335" lengthAdjust="spacingAndGlyphs" class="d">Key, pacemaking and destiny technology are all called new technology. They may be vital to the</text>
<text x="619" y="480.6" textLength="278" lengthAdjust="spacingAndGlyphs" class="d">continuing development of society and to the competitiveness of corporations.</text>
<text x="591" y="513" textLength="197" lengthAdjust="spacingAndGlyphs" class="d"><tspan class="bi">Era has revolutionized the manner</tspan> we stay, paintings,</text>
<text x="591" y="523.6" textLength="198" lengthAdjust="spacingAndGlyphs" class="d">and interact with each other. In this text, we can explore</text>
<text x="591" y="533.4" textLength="187" lengthAdjust="spacingAndGlyphs" class="d">the high quality and poor influences of generation on</text>
<text x="591" y="544.2" textLength="159" lengthAdjust="spacingAndGlyphs" class="d">society and speak the future of era in society.</text>
<text x="591" y="663.5" textLength="197" lengthAdjust="spacingAndGlyphs" class="bi b1" style="font-size:9.5px">Fantastic impacts of technology on Society:</text>
<text x="606" y="675" class="d">1.</text>
<text x="619" y="675" textLength="326" lengthAdjust="spacingAndGlyphs" class="d"><tspan class="i">Stepped forward conversation</tspan>: generation has made it less complicated than ever to connect</text>
<text x="619" y="685.8" textLength="309" lengthAdjust="spacingAndGlyphs" class="d">with people everywhere in the international. With the upward push of social media and</text>
<text x="619" y="695.6" textLength="322" lengthAdjust="spacingAndGlyphs" class="d">messaging apps, we are able to now talk with buddies, own family, and colleagues in actual-</text>
<text x="619" y="706.5" textLength="150" lengthAdjust="spacingAndGlyphs" class="d">time, regardless of in which they're placed.</text>
<text x="606" y="717.3" class="d">2.</text>
<text x="619" y="717.3" textLength="331" lengthAdjust="spacingAndGlyphs" class="d"><tspan class="i">Access to information</tspan>: The net has made it viable to search for and discover facts on definitely</text>
<text x="619" y="728" textLength="311" lengthAdjust="spacingAndGlyphs" class="d">any topic. Additionally, era has made it possible for human beings to get right of entry to</text>
<text x="619" y="738.6" textLength="200" lengthAdjust="spacingAndGlyphs" class="d">schooling and education, regardless of wherein they live.</text>

<!-- Page 3 -->
<text x="1098" y="250.5" class="d">3.</text>
<text x="1112" y="250.5" textLength="340.5" lengthAdjust="spacingAndGlyphs" class="d"><tspan class="i">Medical improvements</tspan>: With the assist of generation, docs and researchers have made extensive</text>
<text x="1112" y="261" textLength="335.5" lengthAdjust="spacingAndGlyphs" class="d">strides in treating and preventing diseases. Technology has made it possible for medical experts</text>
<text x="1112" y="271" textLength="334.5" lengthAdjust="spacingAndGlyphs" class="d">to get entry to patient statistics and speak with different healthcare carriers, which has stepped</text>
<text x="1112" y="282" textLength="154" lengthAdjust="spacingAndGlyphs" class="d">forward the exceptional of care for patients.</text>
<text x="1084" y="358.5" textLength="191" lengthAdjust="spacingAndGlyphs" class="bi b1" style="font-size:9.5px">Negative affects of generation on Society:</text>
<text x="1098" y="383.8" class="d">1.</text>
<text x="1112" y="383.8" textLength="160" lengthAdjust="spacingAndGlyphs" class="d"><tspan class="r" style="font-weight:bold">Job Loss:</tspan> As machines and robots come to be</text>
<text x="1112" y="394.5" textLength="163" lengthAdjust="spacingAndGlyphs" class="d">extra advanced, they're capable of performing</text>
<text x="1112" y="404.3" textLength="152" lengthAdjust="spacingAndGlyphs" class="d">obligations that were previously completed</text>
<text x="1112" y="415" textLength="145" lengthAdjust="spacingAndGlyphs" class="d">through human beings. This may result in</text>
<text x="1112" y="425.8" textLength="167" lengthAdjust="spacingAndGlyphs" class="d">activity loss and monetary instability for people</text>
<text x="1112" y="436.4" textLength="66" lengthAdjust="spacingAndGlyphs" class="d">who are displaced.</text>
<text x="1098" y="447.3" class="d">2.</text>
<text x="1112" y="447.3" textLength="171" lengthAdjust="spacingAndGlyphs" class="d"><tspan class="r bi">Cyberbullying:</tspan> Social media and messaging apps</text>
<text x="1112" y="458" textLength="152" lengthAdjust="spacingAndGlyphs" class="d">have made it easier than ever for people to</text>
<text x="1112" y="468" textLength="163" lengthAdjust="spacingAndGlyphs" class="d">harass and bully others online. This will have a</text>
<text x="1112" y="478.7" textLength="333" lengthAdjust="spacingAndGlyphs" class="d">profound effect on mental health and properly-being, specifically for youngsters and teenagers</text>
<text x="1112" y="489.4" textLength="156" lengthAdjust="spacingAndGlyphs" class="d">who are more susceptible to online bullying.</text>
<text x="1098" y="500.2" class="d">3.</text>
<text x="1112" y="500.2" textLength="327" lengthAdjust="spacingAndGlyphs" class="d"><tspan class="r bi">Generation addiction:</tspan> Many humans spend excessive quantities of time on their telephones,</text>
<text x="1112" y="511" textLength="320" lengthAdjust="spacingAndGlyphs" class="d">computer systems, and different devices, leading to a variety of poor fitness consequences,</text>
<text x="1112" y="520.8" textLength="266" lengthAdjust="spacingAndGlyphs" class="d">which includes eye stress, sleep deprivation, and extended pressure ranges.</text>
<text x="1084" y="555.8" textLength="130" lengthAdjust="spacingAndGlyphs" class="bi" style="font-size:9.5px;fill:#2E74B5">The destiny of era in Society:</text>
<text x="1084" y="567" textLength="358.6" lengthAdjust="spacingAndGlyphs" class="d">Looking in advance, it is clean that technology will hold to play a sizable function in society. Within the</text>
<text x="1084" y="577.5" textLength="357" lengthAdjust="spacingAndGlyphs" class="d">coming years, we are able to anticipate to look new technological advancements so one can exchange</text>
<text x="1084" y="587.5" textLength="107" lengthAdjust="spacingAndGlyphs" class="d">the way we stay and paintings.</text>
<text x="1084" y="598.4" textLength="336" lengthAdjust="spacingAndGlyphs" class="d">However, there also are worries approximately the effect of era on society inside the future. For</text>
<text x="1084" y="609" textLength="365.4" lengthAdjust="spacingAndGlyphs" class="d">instance, there is a developing difficulty about the potential poor outcomes of synthetic intelligence (AI)</text>
<text x="1084" y="619.2" textLength="367.7" lengthAdjust="spacingAndGlyphs" class="d">and automation on jobs and the financial system. Moreover, there are worries about the impact of social</text>
<text x="1084" y="630" textLength="262" lengthAdjust="spacingAndGlyphs" class="d">media on mental health and nicely-being, specially amongst young people.</text>
<text x="1084" y="655.8" textLength="23" lengthAdjust="spacingAndGlyphs" style="font-size:10.5px;font-weight:bold;fill:#2E74B5">End:</text>
<text x="1084" y="666.8" textLength="366.4" lengthAdjust="spacingAndGlyphs" class="d">The consequences of generation on society had been each high quality and terrible. At the same time as</text>
<text x="1084" y="677.6" textLength="367.7" lengthAdjust="spacingAndGlyphs" class="d">technology has made it less difficult to connect with others, get admission to facts, and enhance hospital</text>
<text x="1084" y="687.5" textLength="358.6" lengthAdjust="spacingAndGlyphs" class="d">treatment, it has additionally caused activity loss, cyberbullying, and technology addiction. As we pass</text>
<text x="1084" y="698.3" textLength="329.5" lengthAdjust="spacingAndGlyphs" class="d">ahead, it is going to be important to don't forget the potential impacts of recent technological</text>
<text x="1084" y="709" textLength="355" lengthAdjust="spacingAndGlyphs" class="d">advancements and work to mitigate any terrible results. In the long run, it's far up to anyone to make</text>
<text x="1084" y="719.8" textLength="268.4" lengthAdjust="spacingAndGlyphs" class="d">sure that generation is utilized in a manner that blessings society as a whole.</text>
</g>

<!-- underlines -->
<g fill="none" stroke-width="1">
<path d="M113.4 318.8h30.3" stroke="#111"/>
<g stroke="#2050c8"><path d="M102 340.4h32M380 435h29.6M401 605.7h30M700.7 321h11.8M666.4 353.5h27.6M930 353.5h11M1128 360.6h30.4M1232 631h30"/></g>
<g stroke="#e01010" stroke-dasharray="1.2 1"><path d="M141 285.8h75M222 285.8h57M591.3 406.7h44.4M640.3 428.3h43.1M635.7 471.4h42.3"/></g>
</g>

<!-- STATUS BAR -->
<rect x="0" y="821" width="1568" height="22" fill="#f3f3f3"/>
<text x="12" y="836" class="s" textLength="56" lengthAdjust="spacingAndGlyphs" style="fill:#333">Page 3 of 3</text>
<text x="86" y="836" class="s" textLength="52" lengthAdjust="spacingAndGlyphs" style="fill:#333">956 words</text>
<path d="M159 826h8v11h-8zM166 832l5 6m0-6l-5 6" fill="none" stroke="#444"/>
<path d="M198 825a2 2 0 100 4 2 2 0 000-4zm-5 5h10M198 830v4l-3 4m3-4l3 4" fill="none" stroke="#444"/><path d="M200 834l4 4m0-4l-4 4" stroke="#444"/>
<text x="209" y="836" class="s" textLength="123" lengthAdjust="spacingAndGlyphs" style="fill:#333;font-weight:bold">Accessibility: Investigate</text>
<path d="M1217 827v-2h3m7 0h3v2m-13 9v3h3m7 0h3v-3" fill="none" stroke="#444"/><path d="M1220 827h5l2 2v8h-7z" fill="none" stroke="#444"/>
<text x="1233" y="836.5" class="s" textLength="29" lengthAdjust="spacingAndGlyphs" style="fill:#333">Focus</text>
<path d="M1287 826h6v12h-6zM1293 826h6v12h-6zM1289 829h2m-2 2h2m-2 2h2m4-4h2m-2 2h2m-2 2h2" fill="none" stroke="#444"/>
<rect x="1312" y="821" width="40" height="22" fill="#e1e1e1"/>
<path d="M1327.5 825.5h9v13h-9zM1330 829h4M1330 831.5h4M1330 834h4" fill="none" stroke="#444"/>
<path d="M1366 825.5h9v12h-9zM1368 828.5h5M1368 831h5" fill="none" stroke="#444"/><circle cx="1376" cy="837" r="3.4" fill="#f3f3f3" stroke="#444"/>
<path d="M1399 832h6M1513.5 832h7M1517 828.5v7" stroke="#444"/>
<path d="M1410 832h98" stroke="#777"/><rect x="1436.5" y="826.5" width="5" height="11" fill="#666"/><path d="M1459 829.5v5" stroke="#666"/>
<text x="1534" y="836" class="s" textLength="22" lengthAdjust="spacingAndGlyphs" style="fill:#444">60%</text>

<!-- TASKBAR -->
<rect x="0" y="843" width="1568" height="39" fill="url(#tb)"/>
<g fill="#fff"><path d="M16 855.5l6.2-.9v7h-6.2zM23 854.5l8.3-1.2v8.3H23zM16 862.4h6.2v7l-6.2-.9zM23 862.4h8.3v8.3L23 869.5z"/></g>
<rect x="47.5" y="843.5" width="281.5" height="39" fill="#f1f1f1" stroke="#c9c9c9"/>
<circle cx="70" cy="859" r="6" fill="none" stroke="#222" stroke-width="1.1"/><path d="M66 864l-6 7" stroke="#222" stroke-width="1.2"/>
<text x="86" y="868" style="font-size:15.5px;fill:#222" textLength="126" lengthAdjust="spacingAndGlyphs">Type here to search</text>
<ellipse cx="279" cy="866" rx="11.5" ry="12" fill="#5e7a34"/><path d="M272 855c4-3 10-3 15-1-3 4-10 4-15 1z" fill="#7ba452"/><ellipse cx="275" cy="862" rx="4" ry="5" fill="#8aa45a" opacity=".6"/>
<path d="M299 847c5 5 13 15 13 22 0 6-5 9-11 9s-10-3-10-9c0-8 5-15 8-22z" fill="#56752a"/><path d="M299 851c4 5 11 14 11 19 0 5-4 7-9 7s-8-2-8-7c0-6 4-13 6-19z" fill="#e6cf72"/><ellipse cx="301" cy="868" rx="5.5" ry="6.5" fill="#8a5a2c"/>
<g fill="none" stroke="#fff"><path d="M346 856h12v10h-12zM346 853h12M346 869h12"/></g><path d="M361 855v2M361 861v2" stroke="#fff"/>
<circle cx="402.5" cy="862" r="12.5" fill="url(#edge)"/><path d="M394 866c0-7 6-11 12-10 5 1 7 5 6 8h-10c0 3 3 5 8 5 2 0 3 0 4-1-3 4-8 5-12 4-4 0-7-3-8-6z" fill="#0c3f8e"/>
<path d="M439 853h9l3 3h11v18h-23z" fill="#f5c242"/><rect x="439" y="858" width="23" height="16" fill="#f9d76a"/><rect x="447" y="866" width="9" height="8" fill="#2b7cd3"/><rect x="449" y="869" width="5" height="5" fill="#f9d76a"/>
<rect x="488" y="855" width="21" height="20" rx="2" fill="#f5f5f5"/><path d="M493 855c0-7 11-7 11 0" fill="none" stroke="#2fb3e8" stroke-width="1.6"/><rect x="494" y="860" width="4" height="4" fill="#f25022"/><rect x="499" y="860" width="4" height="4" fill="#7fba00"/><rect x="494" y="865" width="4" height="4" fill="#00a4ef"/><rect x="499" y="865" width="4" height="4" fill="#ffb900"/>
<path d="M535 859l12-9 12 9v15h-24z" fill="#1f8fd6"/><path d="M535 861l12 8 12-8v13h-24z" fill="#6cc7f2"/><path d="M535 861l12 8 12-8-12-6z" fill="#eaf7fd"/>
<rect x="584" y="851" width="22" height="22" rx="3" fill="#a90e0e"/><path d="M589 869c5-3 8-10 7-14-1-1-2 3 1 8s6 3 7 3c-4-1-10 0-15 3z" fill="none" stroke="#fff" stroke-width="1.3"/>
<rect x="631" y="852" width="24" height="20" rx="4" fill="#f00"/><path d="M640 857v10l8-5z" fill="#fff"/>
<circle cx="691" cy="862" r="12" fill="#db4437"/><path d="M691 862L680.6 868a12 12 0 0 1 0-12z" fill="#0f9d58" transform="rotate(-15 691 862)"/><path d="M691 862l-6 10.4a12 12 0 0 0 18-4.4z" fill="#0f9d58"/><path d="M691 862l12 6a12 12 0 0 0-2-11.5z" fill="#f4b400"/><circle cx="691" cy="862" r="5" fill="#4285f4" stroke="#fff" stroke-width="1.5"/><circle cx="697" cy="870" r="5.5" fill="#6f6f6f"/><circle cx="696" cy="868" r="2" fill="#ddd"/>
<ellipse cx="739" cy="862" rx="12" ry="14" fill="url(#zmg)"/><text x="730.5" y="866" style="font-size:10px;font-weight:bold;fill:#fff" textLength="17" lengthAdjust="spacingAndGlyphs">zm</text>
<rect x="777" y="852" width="20" height="20" rx="1.5" fill="#1e8e3e" stroke="#f4b400" stroke-width="1.3"/><circle cx="787" cy="859" r="2.4" fill="#fff"/><path d="M782 867c0-5 10-5 10 0z" fill="#fff"/>
<g fill="#fff"><circle cx="835" cy="862" r="7" fill="none" stroke="#fff" stroke-width="3.2"/><circle cx="835" cy="862" r="9.2" fill="none" stroke="#fff" stroke-width="2" stroke-dasharray="3.6 3.6"/></g>
<rect x="859" y="843" width="48" height="39" fill="#4b5052"/>
<rect x="876" y="852" width="18" height="21" rx="1" fill="#185abd"/><rect x="880" y="852" width="14" height="7" fill="#41a5ee"/><rect x="880" y="859" width="14" height="7" fill="#2b7cd3"/><rect x="872" y="857" width="12" height="12" rx="1" fill="#103f91"/><text x="873.5" y="866.5" style="font-size:9.5px;font-weight:bold;fill:#fff">W</text>
<g fill="#76b9ed"><rect x="431" y="880" width="39" height="2"/><rect x="671" y="880" width="39" height="2"/><rect x="815" y="880" width="39" height="2"/><rect x="859" y="880" width="48" height="2"/></g>
<ellipse cx="1214" cy="857" rx="10" ry="4" fill="#e9991c"/><ellipse cx="1215" cy="863" rx="11" ry="4" fill="#f0a52a"/><ellipse cx="1214" cy="868" rx="9" ry="3.5" fill="#d98612"/><path d="M1210 873l4 4 4-4" fill="none" stroke="#c6402c" stroke-width="1.6"/>
<text x="1236" y="868" style="font-size:14px;fill:#f2f2f2" textLength="55" lengthAdjust="spacingAndGlyphs">AED/PHP</text>
<text x="1300" y="868" style="font-size:14px;fill:#e64a4a" textLength="42" lengthAdjust="spacingAndGlyphs">-0.20%</text>
<path d="M1366 866l5-5 5 5" class="w" stroke-width="1.2"/>
<path d="M1390 857v8h9v-6h-6zM1388 855h4v3h-4z" fill="none" stroke="#fff"/>
<path d="M1413 868a11 11 0 0 1 12-11M1416 868a8 8 0 0 1 8-8M1419 868a5 5 0 0 1 5-5" class="w" stroke-dasharray="2 .8"/>
<path d="M1436 859h3l3-3v12l-3-3h-3zM1444 858c1.5 2 1.5 6 0 8M1446 856c2.5 3 2.5 9 0 12" class="w"/>
<text x="1459" y="857" style="font-size:12px;fill:#fff" textLength="49" lengthAdjust="spacingAndGlyphs">12:50 PM</text>
<text x="1458" y="875" style="font-size:12px;fill:#fff" textLength="52" lengthAdjust="spacingAndGlyphs">7/31/2024</text>
<path d="M1530 853h14v12h-5l-3 3v-3h-6z" fill="#fff"/><path d="M1533 857h8M1533 860h8" stroke="#333"/>
<circle cx="1543" cy="867" r="7.5" fill="#2a2d2f" stroke="#9c9c9c"/><text x="1540.2" y="871" style="font-size:10px;font-weight:bold;fill:#fff">2</text>
</svg>
</body></html>
